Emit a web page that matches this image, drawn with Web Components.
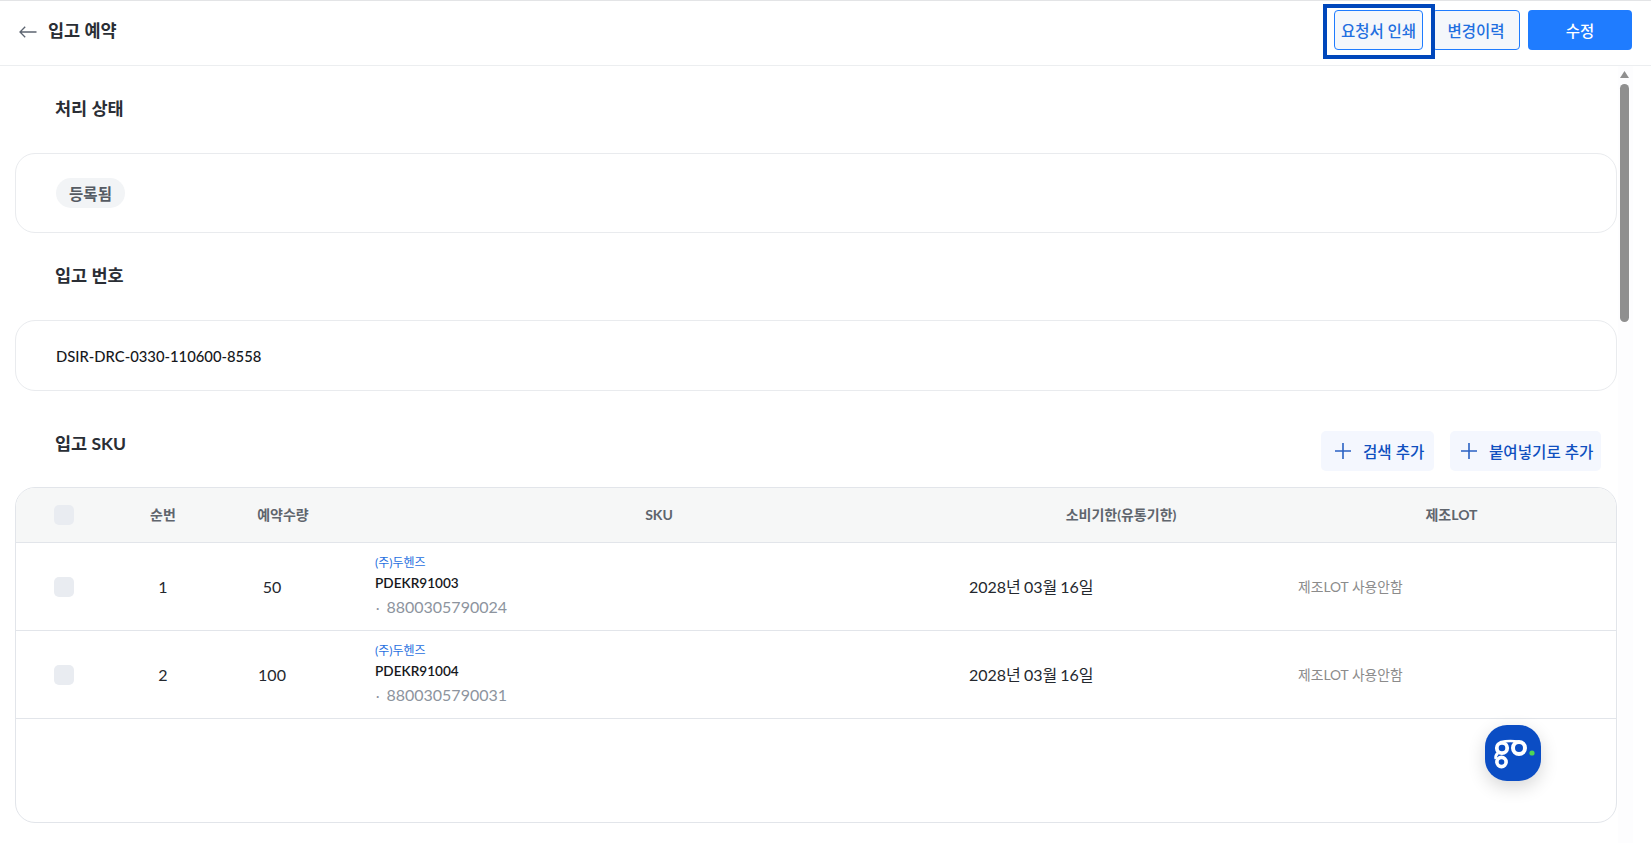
<!DOCTYPE html>
<html lang="ko">
<head>
<meta charset="utf-8">
<title>입고 예약</title>
<style>
    html, body { margin: 0; height: 100%; overflow: hidden; background: #fff; }
    body { font-family: Lato, "Noto Sans CJK KR", sans-serif; color: #1f2329; }
</style>
</head>
<body>
<app-page></app-page>

<script>
const FONT = 'Lato, "Noto Sans CJK KR", sans-serif';

class TopBar extends HTMLElement {
    constructor() {
        super();
        this.attachShadow({ mode: "open" });
        this.shadowRoot.innerHTML = `
            <style>
                :host { display: flex; align-items: center; height: 40px; border-top: 1px solid #e3e4e6; border-bottom: 1px solid #eceef0; padding: 9px 19px 15px 19px; background: #fff; flex: none; }
                svg { width: 18px; height: 12px; margin-right: 11px; margin-top: 4px; flex: none; }
                h1 { font: 700 17.5px ${FONT}; color: #2a2e35; margin: 0 0 2px; flex: 1; }
                .btns { display: flex; }
                button { font: 500 15.5px ${FONT}; height: 40px; border-radius: 4px; box-sizing: border-box; padding: 0; cursor: pointer; }
                .light { background: #f4f7fb; border: 1px solid #1f7cff; color: #1f6fe0; }
                .print { width: 89px; position: relative; }
                /* the focus ring in the reference is square and not even on all sides */
                .print::after { content: ""; position: absolute; top: -7px; bottom: -10px; left: -12px; right: -13px; border: 4px solid #0047bb; pointer-events: none; }
                .hist { width: 88px; margin-left: 9px; }
                .main { width: 104px; margin-left: 8px; background: #1f7cff; border: 0; color: #fff; }
            </style>
            <svg viewBox="0 0 18 12" fill="none" stroke="#5c6470" stroke-width="1.3"><path d="M17.5 6H1M6.2 .8 1 6l5.2 5.2"/></svg>
            <h1><slot></slot></h1>
            <div class="btns">
                <button class="light print">요청서 인쇄</button>
                <button class="light hist">변경이력</button>
                <button class="main">수정</button>
            </div>
        `;
    }
}

class SectionTitle extends HTMLElement {
    constructor() {
        super();
        this.attachShadow({ mode: "open" });
        this.shadowRoot.innerHTML = `
            <style>
                :host { display: flex; align-items: flex-start; justify-content: space-between; height: 40px; padding: 0 31px 0 55px; font: 700 17.5px/40px ${FONT}; color: #2a2e35; }
            </style>
            <span><slot></slot></span>
            <slot name="actions"></slot>
        `;
    }
}

class InfoCard extends HTMLElement {
    constructor() {
        super();
        this.attachShadow({ mode: "open" });
        this.shadowRoot.innerHTML = `
            <style>
                :host { display: flex; align-items: center; box-sizing: border-box; margin: 0 15px; padding: 0 40px; border: 1px solid #e9ebee; border-radius: 20px; background: #fff; font: 500 14.8px ${FONT}; color: #16181c; }
            </style>
            <slot></slot>
        `;
    }
}

class StatusChip extends HTMLElement {
    constructor() {
        super();
        this.attachShadow({ mode: "open" });
        this.shadowRoot.innerHTML = `
            <style>
                :host { display: inline-flex; align-items: center; justify-content: center; width: 69px; height: 30px; border-radius: 15px; background: #f2f4f6; color: #555b63; font: 700 15.5px ${FONT}; }
            </style>
            <slot></slot>
        `;
    }
}

class AddButton extends HTMLElement {
    constructor() {
        super();
        this.attachShadow({ mode: "open" });
        this.shadowRoot.innerHTML = `
            <style>
                :host { display: inline-flex; align-items: center; box-sizing: border-box; height: 40px; border-radius: 5px; background: #f4f7fe; color: #0f4fbf; font: 500 15.6px ${FONT}; white-space: nowrap; }
                svg { width: 16px; height: 16px; margin-right: 12px; flex: none; }
            </style>
            <svg viewBox="0 0 16 16" fill="none" stroke="#2a62c4" stroke-width="1.6"><path d="M8 0v16M0 8h16"/></svg>
            <slot></slot>
        `;
    }
}

class SkuRow extends HTMLElement {
    constructor() {
        super();
        this.attachShadow({ mode: "open" });
        const d = this.dataset;
        this.shadowRoot.innerHTML = `
            <style>
                :host { display: grid; grid-template-columns: 97px 100px 118px 638px 329px 1fr; align-items: center; height: 88px; box-sizing: border-box; border-bottom: 1px solid #e2e5ea; font: 400 16px ${FONT}; color: #24282e; }
                .check { width: 20px; height: 20px; border-radius: 5px; background: #e9ecf1; margin-left: 38px; }
                .c { text-align: center; }
                .sku { padding-left: 44px; }
                .brand { font: 400 12px/17px ${FONT}; color: #1f6fe0; }
                .code { font: 600 13.6px/20px ${FONT}; color: #16181c; margin-top: 2px; }
                .bar { font: 400 16px/22px ${FONT}; color: #8d949e; margin-top: 3px; }
                .bar i { font-style: normal; font-size: 13px; margin: 0 7px 0 1px; }
                .date { word-spacing: -1px; margin-bottom: 2px; }
                .lot { font: 400 13.8px ${FONT}; color: #8b8b8b; margin-bottom: 2px; }
            </style>
            <span class="check"></span>
            <span class="c">${d.no}</span>
            <span class="c">${d.qty}</span>
            <div class="sku">
                <div class="brand">(주)두헨즈</div>
                <div class="code">${d.code}</div>
                <div class="bar"><i>·</i>${d.bar}</div>
            </div>
            <span class="date">${d.date}</span>
            <span class="lot">제조LOT 사용안함</span>
        `;
    }
}

class SkuTable extends HTMLElement {
    constructor() {
        super();
        this.attachShadow({ mode: "open" });
        this.shadowRoot.innerHTML = `
            <style>
                :host { display: block; box-sizing: border-box; height: 336px; margin: 0 15px; border: 1px solid #e2e5ea; border-radius: 20px; overflow: hidden; background: #fff; }
                .head { display: grid; grid-template-columns: 97px 100px 140px 612px 312px 1fr; align-items: center; height: 55px; box-sizing: border-box; background: #f6f7f7; border-bottom: 1px solid #e2e5ea; font: 700 14px ${FONT}; color: #5f656d; text-align: center; }
                .head span { margin-bottom: 2px; }
                .head .check { width: 20px; height: 20px; border-radius: 5px; background: #e9ecf1; margin: 0 0 0 38px; }
                .lot { padding-left: 10px; }
            </style>
            <div class="head">
                <span class="check"></span>
                <span>순번</span>
                <span>예약수량</span>
                <span>SKU</span>
                <span>소비기한(유통기한)</span>
                <span class="lot">제조LOT</span>
            </div>
            <slot></slot>
        `;
    }
}

class ScrollTrack extends HTMLElement {
    constructor() {
        super();
        this.attachShadow({ mode: "open" });
        this.shadowRoot.innerHTML = `
            <style>
                :host { display: block; position: absolute; top: 0; right: 18px; bottom: 0; width: 15px; background: #fdfdfe; }
                svg { position: absolute; top: 5px; left: 2px; }
                .thumb { position: absolute; top: 18px; left: 2px; width: 9px; height: 238px; border-radius: 5px; background: #8f8f8f; }
            </style>
            <svg width="9" height="7" viewBox="0 0 9 7"><path d="M4.5 0 9 7H0z" fill="#8f8f8f"/></svg>
            <div class="thumb"></div>
        `;
    }
}

class GoBadge extends HTMLElement {
    constructor() {
        super();
        this.attachShadow({ mode: "open" });
        this.shadowRoot.innerHTML = `
            <style>
                :host { display: block; position: absolute; left: 1485px; top: 725px; width: 56px; height: 56px; border-radius: 22px; background: #0b4dc4; box-shadow: 0 6px 18px rgba(0,0,0,.16); }
                svg { display: block; width: 56px; height: 56px; }
            </style>
            <svg viewBox="0 0 56 56" fill="none" stroke="#fff">
                <circle cx="17" cy="23" r="5.200" stroke-width="3.800"/>
                <circle cx="16.500" cy="37" r="4.600" stroke-width="3.600"/>
                <circle cx="34" cy="23" r="6" stroke-width="4"/>
                <path d="M15 17.200c5-1.200 14-1.400 19-.400" stroke-width="2.600"/>
                <path d="M13 28c-2.200 1.500-2.800 3-2.200 6" stroke-width="2.800"/>
                <circle cx="47" cy="28" r="2.600" fill="#4fd653" stroke="none"/>
            </svg>
        `;
    }
}

class AppPage extends HTMLElement {
    constructor() {
        super();
        this.attachShadow({ mode: "open" });
        this.shadowRoot.innerHTML = `
            <style>
                :host { display: flex; flex-direction: column; position: relative; height: 100vh; overflow: hidden; background: #fff; }
                main { flex: 1; display: flex; flex-direction: column; position: relative; padding-right: 19px; }
                .t1 { margin-top: 23px; }
                .c1 { height: 80px; margin-top: 24px; }
                .t2 { margin-top: 23px; }
                .c2 { height: 71px; margin-top: 24px; }
                .t3 { margin-top: 33px; height: 47px; }
                .acts { display: flex; gap: 16px; align-self: flex-end; }
                .a1 { width: 113px; padding-left: 14px; }
                .a2 { width: 151px; padding-left: 11px; }
                sku-table { margin-top: 16px; }
            </style>
            <top-bar>입고 예약</top-bar>
            <main>
                <scroll-track></scroll-track>
                <section-title class="t1">처리 상태</section-title>
                <info-card class="c1"><status-chip>등록됨</status-chip></info-card>
                <section-title class="t2">입고 번호</section-title>
                <info-card class="c2">DSIR-DRC-0330-110600-8558</info-card>
                <section-title class="t3">입고 SKU
                    <div class="acts" slot="actions">
                        <add-button class="a1">검색 추가</add-button>
                        <add-button class="a2">붙여넣기로 추가</add-button>
                    </div>
                </section-title>
                <sku-table>
                    <sku-row data-no="1" data-qty="50" data-code="PDEKR91003" data-bar="8800305790024" data-date="2028년 03월 16일"></sku-row>
                    <sku-row data-no="2" data-qty="100" data-code="PDEKR91004" data-bar="8800305790031" data-date="2028년 03월 16일"></sku-row>
                </sku-table>
            </main>
            <go-badge></go-badge>
        `;
    }
}

customElements.define("top-bar", TopBar);
customElements.define("section-title", SectionTitle);
customElements.define("info-card", InfoCard);
customElements.define("status-chip", StatusChip);
customElements.define("add-button", AddButton);
customElements.define("sku-row", SkuRow);
customElements.define("sku-table", SkuTable);
customElements.define("scroll-track", ScrollTrack);
customElements.define("go-badge", GoBadge);
customElements.define("app-page", AppPage);
</script>
</body>
</html>
